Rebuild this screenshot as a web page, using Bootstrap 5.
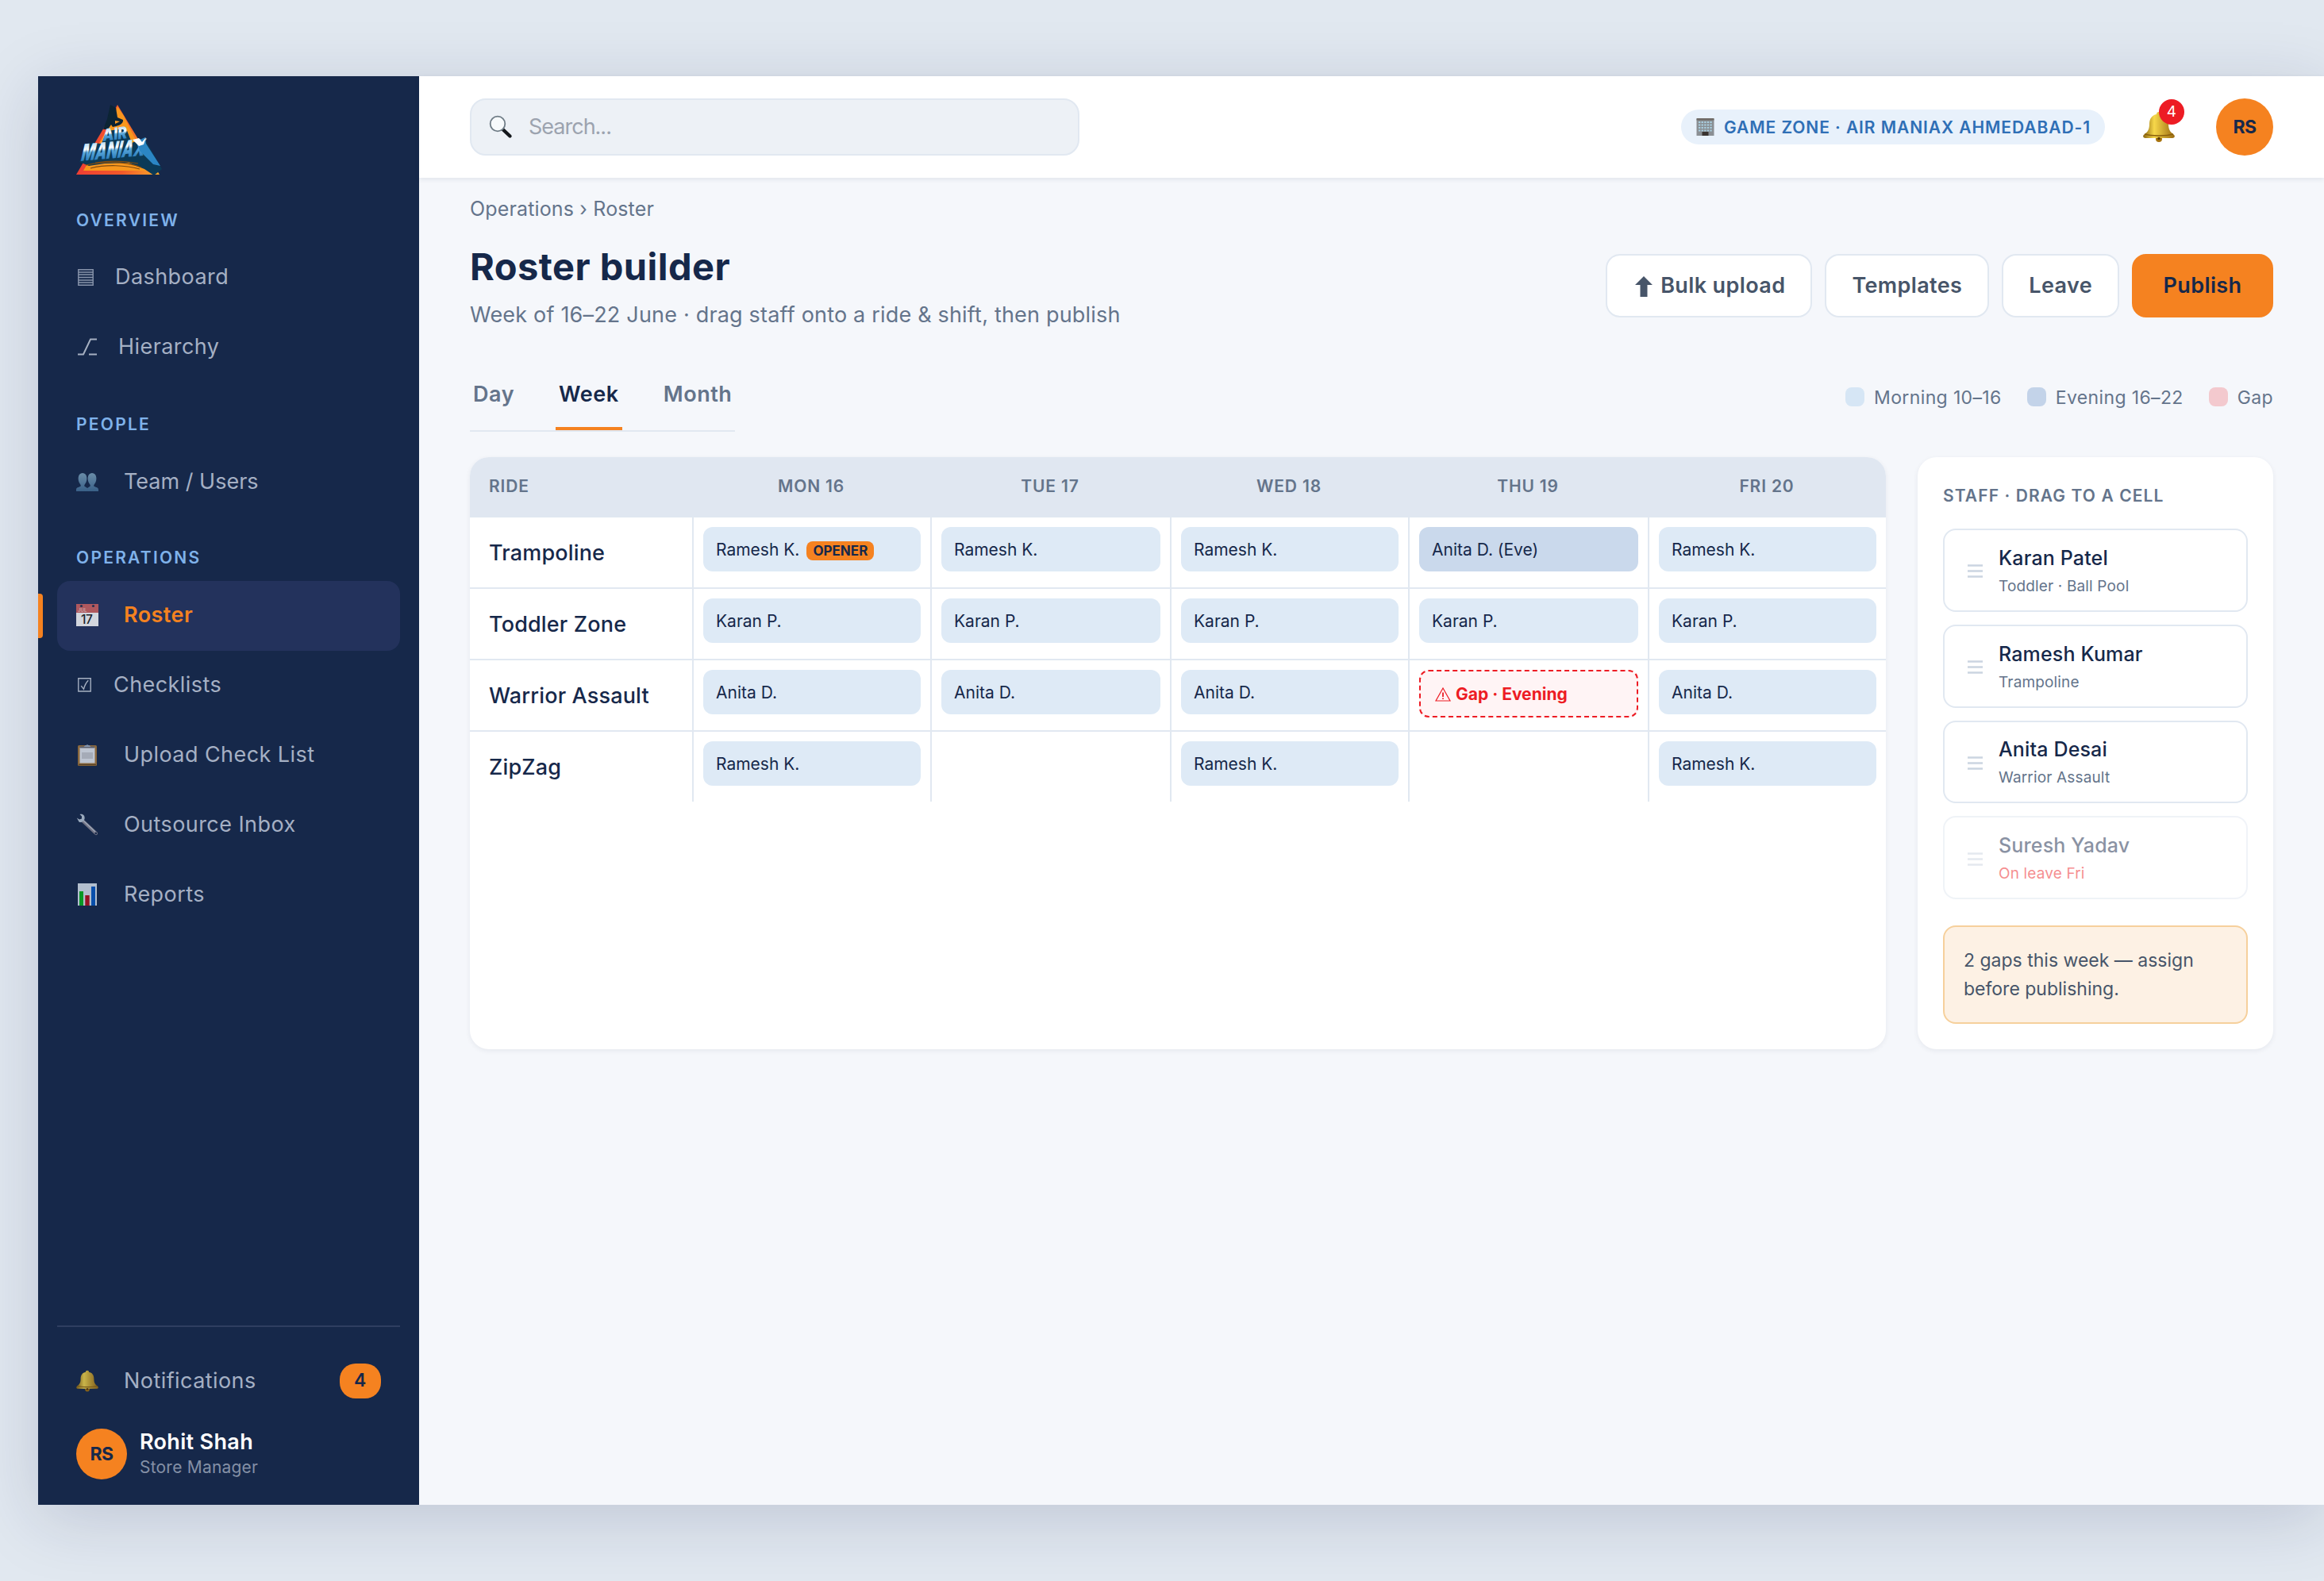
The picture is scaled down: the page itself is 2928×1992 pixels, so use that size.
<!DOCTYPE html>
<html lang="en">
<head>
    <meta charset="UTF-8">
    <meta name="viewport" content="width=device-width, initial-scale=1.0">
    <title>Roster builder</title>

    <link href="https://cdn.jsdelivr.net/npm/bootstrap@5.3.3/dist/css/bootstrap.min.css" rel="stylesheet">
    <style>
        :root {
            --navy: #16284a;
            --orange: #f58220;
            --line: #e1e8f1;
            --slate: #64748b;
            --ink: #475569;
        }
        body {
            background: #e1e8f0;
            color: var(--navy);
            font-family: Inter, "Liberation Sans", sans-serif;
            font-size: 27px;
            line-height: 1.2;
            height: 1992px;
            padding: 96px 0 0 48px;
            overflow: hidden;
        }
        svg { display: block; flex: none; }
        .shell {
            width: 2880px;
            height: 1800px;
            background: #f5f7fb;
            box-shadow: 0 16px 80px rgba(26, 32, 80, .17);
        }

        /* sidebar */
        .side { width: 480px; flex: none; background: var(--navy); padding: 36px 24px 32px; }
        .brand { height: 88px; margin: 0 24px 43px; overflow: visible; }
        .side-title { height: 28px; line-height: 29px; margin: 36px 0 16px; padding-left: 24px; font-size: 21px; font-weight: 600; letter-spacing: .107em; color: #7fb2ea; }
        .side-title.first { margin: 0 0 15px; }
        .side-title.people { margin-top: 38px; }
        .side-item { height: 88px; padding: 0 24px 2px; color: #a5b0c4; text-decoration: none; letter-spacing: .016em; position: relative; }
        .side-item svg { opacity: .8; margin-right: 32px; }
        .side-item svg.line-icon { margin-left: 2px; margin-right: 27px; }
        .side-item svg.tick { margin-right: 28px; }
        .side-item.tight { letter-spacing: 0; }
        .side-item.current { background: #23325c; border-radius: 16px; color: var(--orange); font-weight: 600; }
        .side-item.current::before { content: ""; position: absolute; left: -24px; top: 16px; width: 6px; height: 56px; background: var(--orange); border-radius: 0 4px 4px 0; }
        .side-foot { border-top: 2px solid #2f3e60; padding-top: 24px; }
        .side-foot .side-item { padding-bottom: 0; }
        .count { width: 52px; height: 44px; border-radius: 20px; background: var(--orange); color: var(--navy); font-size: 23px; font-weight: 600; }
        .avatar { width: 64px; height: 64px; background: var(--orange); color: var(--navy); font-size: 23px; font-weight: 700; letter-spacing: -.02em; }
        .me-name { color: #fff; font-weight: 600; line-height: 34px; letter-spacing: .012em; }
        .me-role { color: #8490a6; font-size: 21px; line-height: 30px; letter-spacing: .01em; }

        /* top bar */
        .topbar { height: 128px; padding: 0 64px; background: #fff; box-shadow: 0 2px 6px rgba(22, 40, 74, .09); }
        .search { width: 768px; height: 72px; padding: 0 22px; gap: 20px; background: #edf1f6; border: 2px solid var(--line); border-radius: 20px; color: #9ca3af; letter-spacing: -1px; }
        .place { height: 44px; padding: 0 18px 0 19px; gap: 12px; border-radius: 22px; background: #e8f1fb; color: #2f6fb6; font-size: 21px; font-weight: 600; letter-spacing: .044em; }
        .bell { margin-left: 48px; margin-right: 52px; }
        .bell span { position: absolute; left: 20px; top: -16px; width: 32px; height: 32px; background: #ed1c24; color: #fff; font-size: 19px; }
        .topbar .avatar { width: 72px; height: 72px; }
        .search span, .place span, .avatar { padding-top: 1px; }

        /* page head */
        .page { padding: 0 64px; }
        .crumb { height: 78px; padding-top: 24px; font-size: 25px; line-height: 30px; color: var(--slate); letter-spacing: .006em; }
        .head { height: 110px; }
        .page h1 { font-size: 47px; line-height: 56px; font-weight: 700; margin: 6px 0 0; letter-spacing: .01em; }
        .sub { margin-top: 17px; line-height: 32px; color: var(--slate); letter-spacing: .007em; }
        .tools { padding-top: 18px; }
        .tool { height: 80px; padding: 1px 32px 0; background: #fff; border: 2px solid var(--line); border-radius: 18px; color: var(--ink); font-size: 27px; font-weight: 600; letter-spacing: .014em; }
        .tool svg { margin: 0 10px 0 3px; }
        .tool.go { background: var(--orange); border-color: var(--orange); color: var(--navy); padding: 1px 37.5px 0; }
        .tabs { width: 334px; height: 66px; border-bottom: 2px solid var(--line); font-weight: 600; color: var(--slate); margin-top: 66px; gap: 48px; }
        .tabs a { color: inherit; text-decoration: none; height: 64px; padding: 3px 4px 0; border-bottom: 4px solid transparent; letter-spacing: .02em; }
        .tabs a.on { color: var(--navy); border-color: var(--orange); }
        .legend { font-size: 23px; color: var(--slate); gap: 32px; margin-top: 66px; padding-top: 10px; letter-spacing: .016em; }
        .swatch { width: 24px; height: 24px; border-radius: 8px; margin-right: 12px; background: #d6e6f5; }
        .swatch.evening { background: #c3d3e9; }
        .swatch.missing { background: #f3c9ce; }

        /* roster grid */
        .panels { margin-top: 32px; height: 746px; gap: 40px; }
        .panel { background: #fff; border-radius: 24px; box-shadow: 0 2px 6px rgba(22, 40, 74, .07); overflow: hidden; }
        .days { display: grid; grid-template-columns: 280px 300px 302px 300px 302px 300px; border-bottom: 2px solid var(--line); height: 90px; }
        .days:last-child { height: 88px; border: 0; }
        .days.top { height: 76px; background: #e0e7f1; border: 0; font-size: 21px; font-weight: 600; letter-spacing: .04em; color: var(--slate); line-height: 74px; text-align: center; }
        .ride { height: 88px; padding-left: 24px; font-weight: 500; line-height: 89px; letter-spacing: .006em; }
        .cell { border-left: 2px solid var(--line); padding: 12px; }
        .chip { height: 56px; padding: 1px 16px 0; border-radius: 12px; background: #deeaf6; font-size: 21px; }
        .chip.eve { background: #cad9ec; }
        .chip.gap-slot { height: 60px; background: #fff4f5; border: 2px dashed #ed1c24; color: #ed1c24; font-weight: 700; padding: 2px 18px 0; }
        .chip svg { margin-right: 6px; }
        .opener { height: 24px; line-height: 24px; margin: 3px 0 0 9px; padding: 0 8px; border-radius: 8px; background: var(--orange); font-size: 17px; font-weight: 700; }

        /* staff list */
        .staff { width: 448px; flex: none; padding: 32px; }
        .staff-title { height: 34px; font-size: 21px; line-height: 34px; margin-bottom: 24px; font-weight: 600; letter-spacing: .052em; color: var(--slate); }
        .person { height: 104.8px; margin-bottom: 16px; border: 2px solid var(--line); border-radius: 16px; padding: 3px 29px 0; }
        .person svg { margin-right: 20px; }
        .person .who { font-size: 25px; line-height: 30px; font-weight: 500; letter-spacing: .006em; }
        .person .where { font-size: 19px; line-height: 26px; margin-top: 8px; color: var(--slate); letter-spacing: .008em; }
        .person.away { opacity: .5; }
        .person.away .where { color: #ed1c24; }
        .warn { height: 124px; margin-top: 32.8px; padding: 24px; border: 2px solid #f6d09c; border-radius: 16px; background: #fdf1e4; color: var(--ink); font-size: 23px; line-height: 36px; }
    </style>
</head>
<body>
    <svg width="0" height="0" class="position-absolute">
        <defs>
            <linearGradient id="gold" x1="0" x2="1"><stop offset="0" stop-color="#8a6410"/><stop offset=".35" stop-color="#f7d84a"/><stop offset="1" stop-color="#9a6a10"/></linearGradient>
            <linearGradient id="fire" x1="0" x2="1"><stop offset="0" stop-color="#ee3e34"/><stop offset=".55" stop-color="#f1592a"/><stop offset="1" stop-color="#fbaa2a"/></linearGradient>
            <linearGradient id="ice" x1="0" x2="0" y1="0" y2="1"><stop offset="0" stop-color="#7cc0ea"/><stop offset=".42" stop-color="#fff"/><stop offset=".52" stop-color="#5aa8db"/><stop offset="1" stop-color="#0f63a8"/></linearGradient>
            <linearGradient id="skin" x1="0" x2="0" y1="0" y2="1"><stop offset="0" stop-color="#7fa6c0"/><stop offset="1" stop-color="#436f98"/></linearGradient>
            <symbol id="bell" viewBox="0 0 40 38">
                <circle cx="20" cy="34" r="4" fill="#a8740f"/>
                <path d="M20 0c2 0 3 1 3 3 6 1 9 6 9 12 0 7 2 10 6 13 3 2 2 5-1 5H3c-3 0-4-3-1-5 4-3 6-6 6-13C8 9 11 4 17 3c0-2 1-3 3-3z" fill="url(#gold)"/>
                <path d="M2 28c8 2.500 28 2.500 36 0" fill="none" stroke="#8a5f0c" stroke-width="1.500"/>
                <circle cx="20" cy="33.500" r="1.800" fill="#5d3c05"/>
            </symbol>
            <symbol id="grip" viewBox="0 0 19 17"><path d="M0 1.500h19M0 8.500h19M0 15.500h19" stroke="#cbd5e1" stroke-width="2.400"/></symbol>
        </defs>
    </svg>

    <div class="shell d-flex">
        <aside class="side d-flex flex-column">
            <svg class="brand" width="108" height="88" viewBox="0 0 108 88">
                <path d="M52 0L105 88H0z" fill="url(#fire)"/>
                <path d="M52 2L60 14 94 83H9l38-66z" fill="#f8971d"/>
                <path d="M43 0l7 4 2 12 7 3c1 6-8 8-13 9l-2-3-4 6-6 0 5-13z" fill="#0c2434"/>
                <path d="M49 20l6 1-6 3z" fill="#f8971d"/>
                <path d="M4 72l12-24 16 1 6-16 25-3 7 18 16-6 22 39-10 8-12-8-20-8-30 1-20 3z" fill="#0b3a57"/>
                <path d="M12 76c24-5 50-5 70 3M18 80c20-5 44-4 62 1M24 73c20-3 40-2 54 1" stroke="#7a4a12" stroke-width="1.200" fill="none"/>
                <text transform="translate(33 46) rotate(-7) skewX(-10)" textLength="31" lengthAdjust="spacingAndGlyphs" font-size="21" font-weight="900" fill="url(#ice)">AIR</text>
                <text transform="translate(5 71) rotate(-5) skewX(-18)" textLength="80" lengthAdjust="spacingAndGlyphs" font-size="29" font-weight="900" fill="url(#ice)">MANIAX</text>
                <path d="M76 46l11-5 1 8 18 28-9-2-17-17z" fill="#2b86c4"/>
                <path d="M71 44l8-2 4 5 5-6-3 9-6 2z" fill="#fff"/>
            </svg>
            <div class="side-title first">OVERVIEW</div>
            <a class="side-item d-flex align-items-center" href="#">
                <svg class="line-icon" width="20" height="21" viewBox="0 0 20 21" fill="none" stroke="#a5b0c4"><path d="M.8.800h18.400v19.400H.8z" stroke-width="1.400"/><path d="M1 4h18M1 7h18M1 10.500h18M1 14h18M1 17h18" stroke-width="1.300"/></svg>
                Dashboard
            </a>
            <a class="side-item d-flex align-items-center" href="#">
                <svg class="line-icon" width="24" height="22" viewBox="0 0 24 22" fill="none" stroke="#cbd3e0" stroke-width="2"><path d="M24 1.500h-8L7 20.500H0M14 20.500h10"/></svg>
                Hierarchy
            </a>
            <div class="side-title people">PEOPLE</div>
            <a class="side-item tight d-flex align-items-center" href="#">
                <svg width="28" height="23" viewBox="0 0 28 23" fill="url(#skin)"><path d="M0 23v-2c0-3 3-3 5-4 1 0 1-2 0-3-4-5-3-14 3-14s7 9 3 14c-1 1-1 3 0 3l3 2v4z"/><path d="M14 23v-4l3-2c1 0 1-2 0-3-4-5-3-14 3-14s7 9 3 14c-1 1-1 3 0 3 2 1 5 1 5 4v2z"/></svg>
                Team / Users
            </a>
            <div class="side-title">OPERATIONS</div>
            <a class="side-item current d-flex align-items-center" href="#">
                <svg width="28" height="28" viewBox="0 0 28 28"><path d="M0 0h28v28H0z" fill="#fff"/><path d="M0 0h28v11H0z" fill="#d2625f"/><circle cx="6.500" cy="2.500" r="1.600" fill="#26304c"/><circle cx="21.500" cy="2.500" r="1.600" fill="#26304c"/><text x="2" y="9.500" font-size="6" font-weight="700" letter-spacing="0" fill="#f0b9b5">JUL</text><text x="6" y="24.500" font-size="15.500" font-weight="500" letter-spacing="-.5" fill="#222">17</text></svg>
                Roster
            </a>
            <a class="side-item d-flex align-items-center" href="#">
                <svg class="line-icon tick" width="17" height="18" viewBox="0 0 16 17" fill="none" stroke="#cbd3e0" stroke-width="1.300"><path d="M.7.700h14.600v15.300H.7z"/><path d="M4 9.500l3 4c1-4 3-8 5.500-10.500"/></svg>
                Checklists
            </a>
            <a class="side-item d-flex align-items-center" href="#">
                <svg width="28" height="28" viewBox="0 0 28 28"><rect x="2" y="2" width="24" height="26" rx="1.500" fill="#a8793c"/><path d="M4.500 5h19v19.500h-19z" fill="#e9edf3"/><path d="M5 4.500h18" stroke="#6c6f78" stroke-width="2"/><path d="M9.500 4l2-2h1a2 2 0 0 1 3 0h1l2 2z" fill="#a4b2c6"/><path d="M7 11h14v8H7z" fill="#c9ccd3"/><path d="M3 26.500h22" stroke="#6b4a1e" stroke-width="1.500"/></svg>
                Upload Check List
            </a>
            <a class="side-item d-flex align-items-center" href="#">
                <svg width="28" height="28" viewBox="0 0 28 28"><path d="M8 9l17 16" stroke="#8a8794" stroke-width="4.200" stroke-linecap="round"/><path d="M9 9l15 14" stroke="#c3cad6" stroke-width="1.300"/><path d="M4.500 1c4-1 7 2 6 6-1 3-4 5-7 3.500L.8 5.500 4 7.500l3-1V3.500z" fill="#bccbda"/><circle cx="24.800" cy="25" r="1.300" fill="#16284a"/></svg>
                Outsource Inbox
            </a>
            <a class="side-item d-flex align-items-center" href="#">
                <svg width="28" height="28" viewBox="0 0 28 28"><path d="M2 0h24v28H2z" fill="#dbe5f0"/><path d="M4 10h5v18H4z" fill="#07b51d"/><path d="M11.300 15h5.400v13h-5.400z" fill="#b80d1c"/><path d="M19 4h5v24h-5z" fill="#0759c4"/></svg>
                Reports
            </a>

            <div class="side-foot mt-auto">
                <div class="side-item d-flex align-items-center">
                    <svg width="28" height="28"><use href="#bell"/></svg>
                    Notifications
                    <span class="count d-flex align-items-center justify-content-center ms-auto">4</span>
                </div>
                <div class="d-flex align-items-center px-4 mt-3">
                    <div class="avatar rounded-circle d-flex align-items-center justify-content-center">RS</div>
                    <div class="ms-3">
                        <div class="me-name">Rohit Shah</div>
                        <div class="me-role">Store Manager</div>
                    </div>
                </div>
            </div>
        </aside>

        <main class="flex-grow-1">
            <header class="topbar d-flex align-items-center">
                <div class="search d-flex align-items-center">
                    <svg width="30" height="30" viewBox="0 0 30 30"><path d="M18 18.500l8.500 8" stroke="#15181c" stroke-width="4.400" stroke-linecap="round"/><circle cx="11" cy="11" r="9.300" fill="#f7fafc" stroke="#6f7c86" stroke-width="1.800"/></svg>
                    <span>Search...</span>
                </div>
                <div class="place d-flex align-items-center ms-auto">
                    <svg width="23" height="22" viewBox="0 0 22 22"><path d="M0 1h22v21H0z" fill="#8a8f94"/><path d="M0 0h22v2.500H0z" fill="#6f6a66"/><path d="M2.500 5h17M2.500 8.500h17M2.500 12h17M2.500 15.500h17" stroke="#a9cfe0" stroke-width="2" stroke-dasharray="2.300 1.300"/><path d="M7 17h8v5H7z" fill="#3a3431"/></svg>
                    <span>GAME ZONE · AIR MANIAX AHMEDABAD-1</span>
                </div>
                <div class="bell position-relative">
                    <svg width="40" height="38"><use href="#bell"/></svg>
                    <span class="rounded-circle d-flex align-items-center justify-content-center">4</span>
                </div>
                <div class="avatar rounded-circle d-flex align-items-center justify-content-center">RS</div>
            </header>

            <div class="page">
                <div class="crumb">Operations › Roster</div>
                <div class="head d-flex justify-content-between">
                    <div>
                        <h1>Roster builder</h1>
                        <div class="sub">Week of 16–22 June · drag staff onto a ride &amp; shift, then publish</div>
                    </div>
                    <div class="tools d-flex gap-3">
                        <button class="tool d-flex align-items-center"><svg width="22" height="26" viewBox="0 0 22 26"><path d="M11 0l11 11h-6.500v15h-9V11H0z" fill="#475569"/></svg>Bulk upload</button>
                        <button class="tool">Templates</button>
                        <button class="tool">Leave</button>
                        <button class="tool go">Publish</button>
                    </div>
                </div>

                <div class="d-flex justify-content-between">
                    <nav class="tabs d-flex">
                        <a href="#">Day</a>
                        <a href="#" class="on">Week</a>
                        <a href="#">Month</a>
                    </nav>
                    <div class="legend d-flex">
                        <div class="d-flex"><span class="swatch"></span>Morning 10–16</div>
                        <div class="d-flex"><span class="swatch evening"></span>Evening 16–22</div>
                        <div class="d-flex"><span class="swatch missing"></span>Gap</div>
                    </div>
                </div>

                <div class="panels d-flex">
                    <section class="panel flex-grow-1" id="roster"></section>
                    <section class="panel staff">
                        <div class="staff-title">STAFF · DRAG TO A CELL</div>
                        <div id="staffList"></div>
                        <div class="warn">2 gaps this week — assign<br>before publishing.</div>
                    </section>
                </div>
            </div>
        </main>
    </div>

    <script>
        const days = ["MON 16", "TUE 17", "WED 18", "THU 19", "FRI 20"];
        const rides = [
            { name: "Trampoline", slots: ["Ramesh K.*", "Ramesh K.", "Ramesh K.", "Anita D. (Eve)", "Ramesh K."] },
            { name: "Toddler Zone", slots: ["Karan P.", "Karan P.", "Karan P.", "Karan P.", "Karan P."] },
            { name: "Warrior Assault", slots: ["Anita D.", "Anita D.", "Anita D.", "gap", "Anita D."] },
            { name: "ZipZag", slots: ["Ramesh K.", "", "Ramesh K.", "", "Ramesh K."] }
        ];
        const staff = [
            { who: "Karan Patel", where: "Toddler · Ball Pool" },
            { who: "Ramesh Kumar", where: "Trampoline" },
            { who: "Anita Desai", where: "Warrior Assault" },
            { who: "Suresh Yadav", where: "On leave Fri", away: true }
        ];

        // a trailing * marks the opener of the day
        const chip = (slot) => {
            if (!slot) return "";
            if (slot === "gap") {
                return `<div class="chip gap-slot d-flex align-items-center"><svg width="20" height="18" viewBox="0 0 20 18" fill="none" stroke="#ed1c24" stroke-width="1.200"><path d="M10 1l9 16H1z"/><path d="M10 6.500v5.500M10 13.500v1.500" stroke-width="1.800"/></svg>Gap · Evening</div>`;
            }
            const eve = slot.includes("(Eve)") ? " eve" : "";
            const badge = slot.endsWith("*") ? `<span class="opener">OPENER</span>` : "";
            return `<div class="chip${eve} d-flex align-items-center">${slot.replace("*", "")}${badge}</div>`;
        };

        document.getElementById("roster").innerHTML =
            `<div class="days top"><div class="text-start ps-4">RIDE</div>${days.map(d => `<div>${d}</div>`).join("")}</div>` +
            rides.map(r => `
                <div class="days">
                    <div class="ride">${r.name}</div>
                    ${r.slots.map(s => `<div class="cell">${chip(s)}</div>`).join("")}
                </div>
            `).join("");

        document.getElementById("staffList").innerHTML = staff.map(p => `
            <div class="person d-flex align-items-center${p.away ? " away" : ""}">
                <svg width="19" height="17"><use href="#grip"/></svg>
                <div>
                    <div class="who">${p.who}</div>
                    <div class="where">${p.where}</div>
                </div>
            </div>
        `).join("");
    </script>
    <script src="https://cdn.jsdelivr.net/npm/bootstrap@5.3.3/dist/js/bootstrap.bundle.min.js"></script>
</body>
</html>
